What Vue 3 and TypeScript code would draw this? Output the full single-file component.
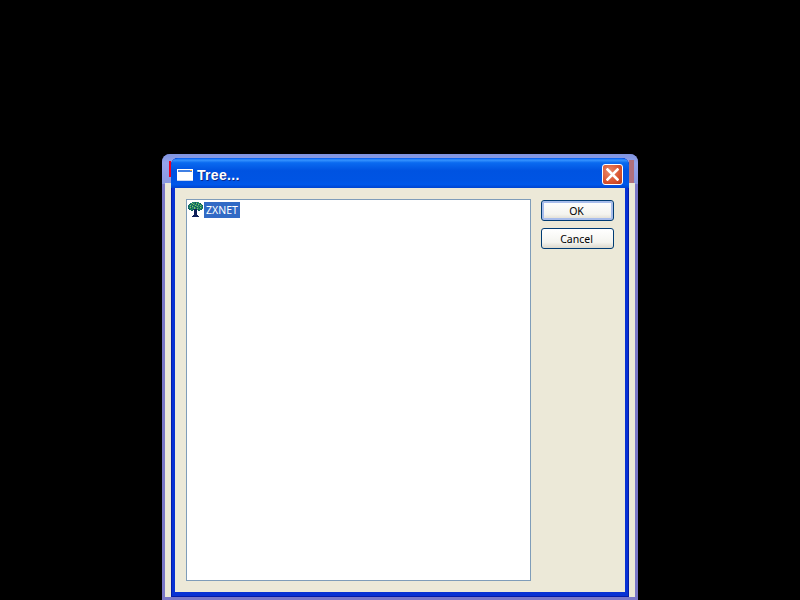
<script setup lang="ts">
// tree icon pixel map: . empty, d dark leaf, g green, t teal, l light leaf, n navy trunk
const rows = [
  '....tgtdgtg.....',
  '..tgltgdltgtd...',
  '.dtgdlgtgdlgtg..',
  'tgltgdtlgtgdlgd.',
  'dtgdlgtdgltgtgt.',
  'tgltgtlgdtgdlgd.',
  'dtgdgtlgtlgtgtg.',
  '.dtgtdnnngdgtd..',
  '...dd.nnn.dd....',
  '......nnn.......',
  '......nnn.......',
  '......nnn.......',
  '......nnn.......',
  '.....nnnnn......',
  '....nnnnnnn.....',
]
const colours: Record<string, string> = {
  d: '#0c5a58',
  g: '#2a9058',
  t: '#146c78',
  l: '#84c070',
  n: '#10205a',
}
const pixels = rows.flatMap((row, y) =>
  [...row].flatMap((c, x) => (c === '.' ? [] : [{ x, y, fill: colours[c] }])),
)
</script>

<template>
  <div class="desktop">
    <div class="back-window">
      <div class="back-inner"></div>
      <div class="sliver-left"></div>
      <div class="sliver-right"></div>
      <div class="dialog">
        <div class="titlebar">
          <svg class="app-icon" width="16" height="12" viewBox="0 0 16 12" shape-rendering="crispEdges">
            <rect width="16" height="12" fill="#fff" />
            <rect x="1" y="1" width="14" height="2" fill="#3f7fe4" />
            <rect x="13" y="1" width="2" height="1" fill="#e8a040" />
            <rect x="0" y="11" width="16" height="1" fill="#c4d4f0" />
          </svg>
          <span class="title">Tree...</span>
          <button class="close" type="button" aria-label="Close">
            <svg width="13" height="13" viewBox="0 0 13 13">
              <path d="M1.5 1.5 L11.5 11.5 M11.5 1.5 L1.5 11.5" stroke="#fff" stroke-width="2.6" stroke-linecap="square" />
            </svg>
          </button>
        </div>
        <div class="body">
          <div class="tree">
            <div class="node">
              <svg class="tree-icon" width="16" height="15" viewBox="0 0 16 15" shape-rendering="crispEdges">
                <rect v-for="p in pixels" :key="`${p.x}-${p.y}`" :x="p.x" :y="p.y" width="1" height="1" :fill="p.fill" />
              </svg>
              <span class="label">ZXNET</span>
            </div>
          </div>
          <div class="actions">
            <button class="btn default" type="button">OK</button>
            <button class="btn" type="button">Cancel</button>
          </div>
        </div>
      </div>
    </div>
  </div>
</template>

<style scoped>
.desktop {
  position: relative;
  width: 800px;
  height: 600px;
  overflow: hidden;
  background: #000;
}

.back-window {
  position: absolute;
  left: 162px;
  top: 154px;
  width: 476px;
  height: 446px;
  background: #7a78c8;
  border-radius: 8px 8px 0 0;
  overflow: hidden;
}

.back-window::before {
  content: "";
  position: absolute;
  left: 0;
  top: 0;
  right: 0;
  height: 30px;
  background: linear-gradient(#7f93e0, #94a4ea 30%, #8a98e0);
}

.back-inner {
  position: absolute;
  left: 3px;
  right: 3px;
  top: 29px;
  bottom: 3px;
  background: #ece9d8;
}

.sliver-left {
  position: absolute;
  left: 7px;
  top: 7px;
  width: 2px;
  height: 16px;
  background: #f00020;
}

.sliver-right {
  position: absolute;
  left: 467px;
  top: 6px;
  width: 5px;
  height: 23px;
  background: #b0707c;
}

.dialog {
  position: absolute;
  left: 9px;
  top: 4px;
  width: 458px;
  height: 439px;
  display: flex;
  flex-direction: column;
  border-radius: 7px 7px 0 0;
  overflow: hidden;
  background: #0832d4;
  box-shadow: inset 0 0 0 1px #041ca8;
}

.titlebar {
  height: 30px;
  flex: none;
  display: flex;
  align-items: center;
  padding: 3px 6px 0 6px;
  box-sizing: border-box;
  background: linear-gradient(#0058ee, #3593ff 7%, #0a6af0 16%, #0053e1 42%, #0054e3 72%, #0058ea 88%, #0044d0);
}

.app-icon {
  flex: none;
}

.title {
  margin-left: 4px;
  font-family: "Liberation Sans", sans-serif;
  font-size: 14px;
  font-weight: 700;
  letter-spacing: 0.3px;
  color: #fff;
  text-shadow: 1px 1px 0 #0a2a90;
}

.close {
  margin-left: auto;
  width: 21px;
  height: 21px;
  padding: 0;
  display: flex;
  align-items: center;
  justify-content: center;
  border: 1px solid #fff;
  border-radius: 3px;
  background: radial-gradient(circle at 35% 35%, #e98a6c, #d8532f 60%, #b8381a);
}

.body {
  flex: 1;
  display: flex;
  gap: 10px;
  margin: 0 4px 5px;
  padding: 11px 11px 11px;
  background: #ece9d8;
}

.tree {
  flex: none;
  width: 345px;
  box-sizing: border-box;
  border: 1px solid #7f9db9;
  background: #fff;
  padding: 2px 1px;
}

.node {
  display: flex;
  align-items: flex-start;
}

.tree-icon {
  flex: none;
}

.label {
  height: 16px;
  padding: 0 2px;
  background: #316ac5;
  color: #fff;
  font-family: "Noto Sans", sans-serif;
  font-size: 10.5px;
  line-height: 16px;
}

.actions {
  display: flex;
  flex-direction: column;
  gap: 7px;
  padding-top: 1px;
}

.btn {
  width: 73px;
  height: 21px;
  padding: 0 2px 0 0;
  box-sizing: border-box;
  border: 1px solid #003c74;
  border-radius: 3px;
  background: linear-gradient(#fff, #f4f4ef 70%, #dcd8cc);
  color: #000;
  font-family: "Noto Sans", sans-serif;
  font-size: 10.5px;
}

.btn.default {
  box-shadow: inset 0 0 0 2px #a8bdeb;
}
</style>

<style>
html,
body {
  background: #000;
}
</style>
